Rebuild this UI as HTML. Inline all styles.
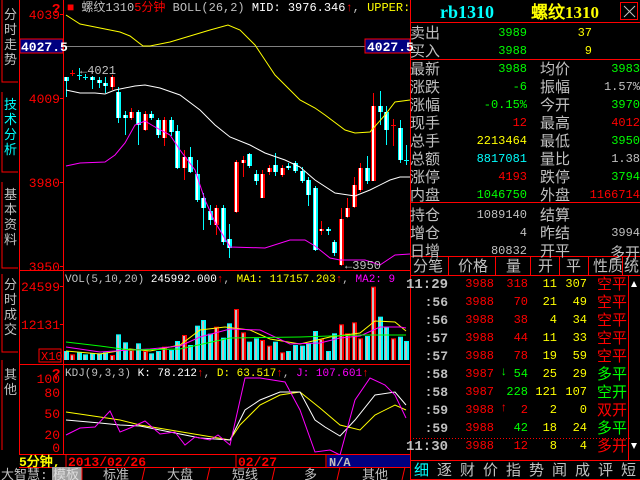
<!DOCTYPE html>
<html><head><meta charset="utf-8"><style>
*{margin:0;padding:0}
body{width:640px;height:480px;background:#000;overflow:hidden;position:relative;font-family:"Liberation Mono","WenQuanYi Zen Hei","Noto Sans CJK SC",monospace}
.t{position:absolute;white-space:nowrap;line-height:1}
.lb{font-family:"WenQuanYi Zen Hei","Noto Sans CJK SC",sans-serif;font-size:15px;color:#c0c0c0}
.n{font-size:12px;text-align:right}
</style></head><body>
<svg id="s" width="640" height="480" style="position:absolute;left:0;top:0" xmlns="http://www.w3.org/2000/svg" font-family="Liberation Mono, WenQuanYi Zen Hei, monospace">
<g stroke="#f00" fill="none" stroke-width="1">
<line x1="63.5" y1="0" x2="63.5" y2="455"/>
<line x1="410.5" y1="0" x2="410.5" y2="480"/>
<line x1="19.5" y1="0" x2="19.5" y2="455"/>
<line x1="19" y1="270.5" x2="410" y2="270.5"/>
<line x1="19" y1="364.5" x2="410" y2="364.5"/>
<line x1="19" y1="454.5" x2="410" y2="454.5"/>
<line x1="19" y1="467.5" x2="410" y2="467.5"/>
<path d="M2 0V82H18M2 92V172H18M2 182V268H18M2 274V352H18M2 360V450"/>
<line x1="410" y1="22.5" x2="640" y2="22.5"/>
<line x1="410" y1="59.5" x2="640" y2="59.5"/>
<line x1="410" y1="202.5" x2="640" y2="202.5"/>
<line x1="410" y1="256.5" x2="640" y2="256.5"/>
<line x1="410" y1="275.5" x2="640" y2="275.5"/>
<line x1="410" y1="460.5" x2="640" y2="460.5"/>
<line x1="410" y1="479.5" x2="640" y2="479.5"/>
<line x1="66" y1="454" x2="66" y2="467"/>
<line x1="236" y1="454" x2="236" y2="467"/>
<line x1="326" y1="454" x2="326" y2="467"/>
<rect x="620.5" y="2.5" width="17" height="17"/>
<line x1="448.5" y1="257" x2="448.5" y2="275"/><line x1="495.5" y1="257" x2="495.5" y2="275"/><line x1="530.5" y1="257" x2="530.5" y2="275"/><line x1="559.5" y1="257" x2="559.5" y2="275"/><line x1="588.5" y1="257" x2="588.5" y2="275"/><line x1="622.5" y1="257" x2="622.5" y2="275"/>
<line x1="628.5" y1="276" x2="628.5" y2="460"/>
</g>
<line x1="410" y1="438.5" x2="630" y2="438.5" stroke="#f00" stroke-dasharray="1,2"/>
<line x1="63" y1="46.5" x2="410" y2="46.5" stroke="#808080"/>
<rect x="20" y="39" width="43" height="14" fill="#000080" stroke="#f00"/>
<text x="21" y="51" fill="#fff" font-size="13" font-weight="bold">4027.5</text>
<rect x="365" y="39" width="45" height="14" fill="#000080" stroke="#f00"/>
<text x="367" y="51" fill="#fff" font-size="13" font-weight="bold">4027.5</text>
<g fill="#f00" font-size="13" text-anchor="end">
<text x="60" y="19">4039</text><text x="60" y="103">4009</text><text x="60" y="187">3980</text><text x="60" y="271">3950</text>
<text x="60" y="291">24599</text><text x="60" y="329">12131</text>
<text x="60" y="383">100</text><text x="60" y="397">80</text><text x="60" y="418">50</text><text x="60" y="439">20</text><text x="60" y="452">0</text>
</g>
<g stroke="#f00"><line x1="60" y1="14.5" x2="63" y2="14.5"/><line x1="60" y1="98.5" x2="63" y2="98.5"/><line x1="60" y1="182.5" x2="63" y2="182.5"/><line x1="60" y1="266.5" x2="63" y2="266.5"/><line x1="60" y1="286.5" x2="63" y2="286.5"/><line x1="60" y1="324.5" x2="63" y2="324.5"/></g>
<rect x="39" y="349" width="22" height="13" fill="none" stroke="#f00"/><text x="41" y="360" fill="#f00" font-size="12">X10</text>
<text x="52" y="13" fill="#f00" font-size="14" font-weight="bold">?</text>
<text x="52" y="378" fill="#f00" font-size="14" font-weight="bold">?</text>
<g id="g"></g>
<text x="67" y="11" font-size="12" fill="#c0c0c0"><tspan fill="#f00">■</tspan> 螺纹1310<tspan fill="#f00">5分钟</tspan> BOLL(26,2) <tspan fill="#fff">MID: 3976.346</tspan><tspan fill="#f00">↑</tspan>, <tspan fill="#ff0">UPPER: </tspan></text>
<text x="80" y="74" font-size="12" fill="#c0c0c0">←4021</text>
<text x="345" y="269" font-size="12" fill="#c0c0c0">←3950</text>
<text x="65" y="282" font-size="11" fill="#c0c0c0">VOL(5,10,20) <tspan fill="#fff">245992.000</tspan><tspan fill="#f00">↑</tspan>, <tspan fill="#ff0">MA1: 117157.203</tspan><tspan fill="#f00">↑</tspan>, <tspan fill="#f0f">MA2: 9</tspan></text>
<text x="65" y="376" font-size="11" fill="#c0c0c0">KDJ(9,3,3) <tspan fill="#fff">K: 78.212</tspan><tspan fill="#f00">↑</tspan>, <tspan fill="#ff0">D: 63.517</tspan><tspan fill="#f00">↑</tspan>, <tspan fill="#f0f">J: 107.601</tspan><tspan fill="#f00">↑</tspan></text>
<rect x="327" y="455" width="83" height="12" fill="#000080"/>
<text x="329" y="466" font-size="12" font-weight="bold" fill="#c0c0c0">N/A</text>
<text x="19" y="466" font-size="13" font-weight="bold" fill="#ff0">5分钟,</text>
<text x="68" y="466" font-size="13" font-weight="bold" fill="#f00">2013/02/26</text>
<text x="238" y="466" font-size="13" font-weight="bold" fill="#f00">02/27</text>
<rect x="52" y="467" width="30" height="13" fill="#a0a0a0"/>
<g font-size="13" fill="#c0c0c0"><text x="1" y="479">大智慧:</text><text x="53" y="479" fill="#ddd">模板</text><text x="103" y="479">标准</text><text x="167" y="479">大盘</text><text x="232" y="479">短线</text><text x="304" y="479">多</text><text x="362" y="479">其他</text></g>
<g stroke="#f00" fill="none"><path d="M82 467v13M145 467l-3 13M210 467l-3 13M275 467l-3 13M340 467l-3 13M405 467l-3 13"/></g>
<text x="440" y="18" font-size="18" font-weight="bold" fill="#0ff" font-family="Liberation Serif,serif">rb1310</text>
<text x="531" y="18" font-size="17" font-weight="bold" fill="#ff0" font-family="Liberation Serif,WenQuanYi Zen Hei,serif">螺纹1310</text>
<path d="M624 6l11 11M635 6l-11 11" stroke="#c0c0c0"/>
<rect x="630" y="279" width="8" height="176" fill="#000"/>
<path d="M631 287l3-6 3 6z M631 443l3 6 3-6z" fill="#fff"/>
</svg>
<div class="t lb" style="left:4px;top:6px;width:14px;font-size:13px;line-height:15px;white-space:normal">分时走势</div>
<div class="t lb" style="left:4px;top:96px;width:14px;font-size:13px;line-height:15px;white-space:normal;color:#0ff">技术分析</div>
<div class="t lb" style="left:4px;top:186px;width:14px;font-size:13px;line-height:15px;white-space:normal">基本资料</div>
<div class="t lb" style="left:4px;top:276px;width:14px;font-size:13px;line-height:15px;white-space:normal">分时成交</div>
<div class="t lb" style="left:4px;top:366px;width:14px;font-size:13px;line-height:15px;white-space:normal">其他</div>
<div id="rp"></div>
<script>
var g=document.getElementById('g'),h='';
function py(p){return 14+(4039-p)*2.8}
var C=[[66,77,81,'c',77,97],[72,73,73,'r',70,76],[79,75,75,'c',68,80],[85,77,77,'c',74,80],[92,77,80,'c',76,89],[99,80,83,'c',77,88],[105,83,86,'c',77,93],[112,77,87,'r',75,90],[118,92,118,'c',87,123],[125,115,118,'c',111,135],[131,112,118,'r',108,120],[138,112,125,'c',110,145],[145,114,130,'r',111,131],[151,114,118,'c',111,120],[158,120,135,'c',118,138],[164,120,138,'r',117,146],[171,120,132,'c',117,136],[177,131,168,'c',125,169],[184,157,168,'r',150,180],[190,157,172,'c',147,173],[197,174,200,'c',160,202],[203,198,208,'c',193,230],[210,211,220,'c',205,225],[216,208,225,'r',205,235],[223,208,242,'c',205,245],[229,239,248,'c',224,258],[236,162,212,'r',160,213],[243,160,163,'r',156,177],[249,154,166,'c',153,168],[256,174,181,'c',170,185],[262,174,198,'r',170,198],[269,168,172,'r',165,175],[275,165,172,'c',153,176],[282,168,175,'r',165,177],[288,166,168,'c',163,170],[295,163,171,'c',161,173],[302,171,181,'c',167,183],[308,180,195,'c',177,206],[315,188,250,'c',186,251],[321,229,231,'r',221,235],[328,229,231,'c',227,235],[334,242,253,'c',240,256],[341,219,265,'r',208,266],[347,208,217,'r',198,218],[354,185,207,'r',177,208],[360,168,190,'r',163,192],[367,168,181,'c',156,184],[373,106,181,'r',93,181],[380,106,112,'c',91,125],[386,112,130,'c',106,145],[393,125,125,'r',119,146],[400,128,160,'c',120,163],[406,160,160,'c',145,165]];
var V=[258,268,262,268,265,265,262,270,208,232,255,235,258,265,258,245,255,228,210,240,182,165,206,185,218,175,132,202,230,220,225,242,230,262,258,240,242,235,198,222,258,205,178,205,172,220,213,65,155,185,220,215,228];
C.forEach(function(c,i){var x=c[0],col=c[3]=='r'?'#f00':'#0ff';
h+='<line x1="'+(x+0.5)+'" y1="'+c[4]+'" x2="'+(x+0.5)+'" y2="'+c[5]+'" stroke="'+col+'"/>';
var hh=Math.max(1,c[2]-c[1]);
if(hh<=1)h+='<line x1="'+(x-2)+'" y1="'+(c[1]+.5)+'" x2="'+(x+3)+'" y2="'+(c[1]+.5)+'" stroke="'+col+'"/>';
else h+='<rect x="'+(x-2)+'" y="'+c[1]+'" width="5" height="'+hh+'" fill="'+col+'"/><rect x="'+(x-1)+'" y="'+c[1]+'" width="2" height="'+hh+'" fill="#fff"/>';
var t=265+V[i]/3;h+='<rect x="'+(x-2)+'" y="'+t+'" width="5" height="'+(360-t)+'" fill="'+col+'"/><rect x="'+(x-1)+'" y="'+(t+1)+'" width="2" height="'+(359-t)+'" fill="#c0c0c0"/>';});
function pl(p,c){h+='<polyline fill="none" stroke="'+c+'" points="'+p+'"/>'}
pl('66,15 80,24 90,26 120,32 130,36 143,46 150,46 170,42 190,36 210,30 228,25 240,30 255,45 265,60 275,75 285,85 300,100 315,108 325,115 345,130 355,133 370,132 385,115 395,102 410,100','#ff0');
pl('66,90 80,93 95,93 105,94 115,90 135,86 145,85 160,88 180,95 200,110 215,125 230,137 250,145 265,153 285,160 300,167 315,180 335,193 355,196 370,190 390,180 400,177 410,177','#fff');
pl('66,166 80,163 105,162 115,155 125,143 135,125 145,121 155,127 170,135 180,150 195,170 205,200 215,222 230,247 265,248 290,240 305,240 315,246 330,258 340,260 365,260 380,265 395,255 410,254','#f0f');
pl('66,351 100,354 130,349 150,351 180,345 200,330 225,327 250,330 270,339 300,344 330,337 360,333 375,321 395,322 406,331','#ff0');
pl('66,347 100,352 130,350 150,349 180,346 200,337 230,329 260,330 290,344 320,343 340,338 360,336 380,327 400,327 406,328','#f0f');
pl('66,342 100,346 130,350 180,349 230,338 300,337 360,335 406,335','#0f0');
pl('66,412 100,417 120,420 140,425 170,430 200,435 230,440 240,425 260,405 280,395 300,392 320,408 340,425 360,430 375,415 395,405 406,410','#ff0');
pl('66,420 100,423 120,425 140,426 170,432 200,438 230,440 245,410 260,400 280,392 300,392 315,420 325,427 340,436 355,420 375,395 395,392 406,405','#fff');
pl('66,435 80,428 95,427 110,411 120,432 130,428 145,421 160,434 175,432 185,445 195,437 210,440 218,435 230,445 245,378 260,378 285,382 300,410 315,452 330,450 340,455 355,400 370,378 385,385 395,395 406,418','#f0f');
g.innerHTML=h;
var rp='';
function T(x,y,s,c,cls,a){rp+='<div class="t '+(cls||'n')+'" style="'+(a?'right:'+(640-x)+'px':'left:'+x+'px')+';top:'+y+'px;color:'+c+'">'+s+'</div>'}
var G='#0f0',R='#f00',Y='#ff0',W='#c0c0c0',Cy='#0ff';
T(410,25,'卖出',W,'lb');T(527,27,'3989',G,'n',1);T(592,27,'37',Y,'n',1);
T(410,43,'买入',W,'lb');T(527,45,'3988',G,'n',1);T(592,45,'9',Y,'n',1);
var rows=[['最新','3988',G,'均价','3983',G],['涨跌','-6',G,'振幅','1.57%',W],['涨幅','-0.15%',G,'今开','3970',G],['现手','12',R,'最高','4012',R],['总手','2213464',Y,'最低','3950',G],['总额','8817081',Cy,'量比','1.38',W],['涨停','4193',R,'跌停','3794',G],['内盘','1046750',G,'外盘','1166714',R],['持仓','1089140',W,'结算','',W],['增仓','4',W,'昨结','3994',W],['日增','80832',W,'开平','多开',W]];
rows.forEach(function(r,i){var y=61+i*18+(i>7?2:0);T(410,y,r[0],W,'lb');T(527,y+2,r[1],r[2],'n',1);T(540,y,r[3],W,'lb');T(640,y+2,r[4],r[5],r[3]=='开平'?'lb':'n',1);});
['分笔','价格','量','开','平','性质','统'].forEach(function(s,i){T([413,458,506,538,566,593,624][i],258,s,W,'lb')});
var L=[['11:29','318','11','307','空平',R,R],[':56','70','21','49','空平',R,R],[':56','38','4','34','空平',R,R],[':57','44','11','33','空平',R,R],[':57','78','19','59','空平',R,R],[':58','54','25','29','多平',G,G],[':58','228','121','107','空开',G,G],[':59','2','2','0','双开',R,R],[':59','42','18','24','多平',G,G],['11:30','12','8','4','多开',R,R]];
L.forEach(function(r,i){var y=278+i*18;var big=r[0].length>3;rp+='<div class="t" style="right:'+(640-448)+'px;top:'+y+'px;font-size:'+(big?14:13)+'px;font-weight:bold;color:'+W+'">'+r[0]+'</div>';
T(494,y,i==6?'3987':(i==5?'3987':'3988'),R,'n',1);T(528,y,r[1],r[5],'n',1);T(557,y,r[2],Y,'n',1);T(587,y,r[3],Y,'n',1);T(597,y-2,r[4],r[6],'lb');});
T(500,276+5*18,'↓',G,'n');T(500,276+7*18,'↑',R,'n');
['细','逐','财','价','指','势','闻','成','评','短'].forEach(function(s,i){T(414+i*23,462,s,i?W:Cy,'lb')});
document.getElementById('rp').innerHTML=rp;
</script>
</body></html>
